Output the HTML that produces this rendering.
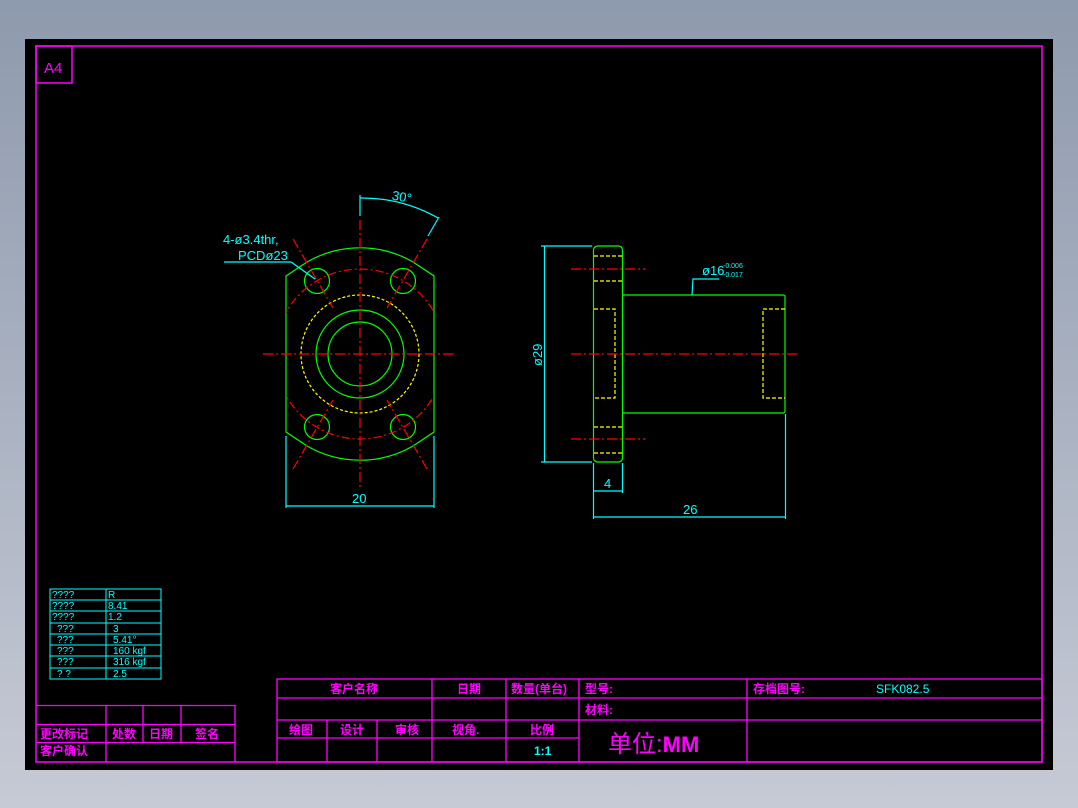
<!DOCTYPE html>
<html><head><meta charset="utf-8"><style>
html,body{margin:0;padding:0;width:1078px;height:808px;overflow:hidden;background:linear-gradient(#8e9aad,#c6cad5);}
svg{position:absolute;left:0;top:0}
.m{font-family:"Liberation Sans","Noto Sans CJK SC",sans-serif;font-weight:bold;fill:#ff00ff;font-size:12px}
</style></head><body>
<svg width="1078" height="808" viewBox="0 0 1078 808">
<rect x="25" y="39" width="1028" height="731" fill="#000"/>
<g fill="none" stroke="#ff00ff" stroke-width="1.5">
<rect x="36" y="46" width="1006" height="716"/>
<rect x="36" y="46" width="36" height="37"/>
</g>
<text x="44" y="73" fill="#ff00ff" font-family="Liberation Sans" font-size="15">A4</text>

<defs><clipPath id="fl"><path d="M286,276 L307,262 A106,106 0 0 1 413,262 L434,276 L434,432 L413,446 A106,106 0 0 1 307,446 L286,432 Z"/></clipPath></defs>
<g fill="none" stroke-width="1.2">
<path d="M286,276 L307,262 A106,106 0 0 1 413,262 L434,276 L434,432 L413,446 A106,106 0 0 1 307,446 L286,432 Z" stroke="#00ff00"/>
<circle cx="360" cy="354" r="44" stroke="#00ff00"/>
<circle cx="360" cy="354" r="32" stroke="#00ff00"/>
<circle cx="317" cy="281" r="12.5" stroke="#00ff00"/>
<circle cx="403" cy="281" r="12.5" stroke="#00ff00"/>
<circle cx="317" cy="427" r="12.5" stroke="#00ff00"/>
<circle cx="403" cy="427" r="12.5" stroke="#00ff00"/>
<circle cx="360" cy="354" r="59" stroke="#ffff00" stroke-dasharray="3,2"/>
<circle cx="360" cy="354" r="85" stroke="#ff0000" stroke-dasharray="8,3,2,3" clip-path="url(#fl)"/>
<g stroke="#ff0000" stroke-dasharray="10,3,2,3">
<line x1="263" y1="354" x2="456" y2="354"/>
<line x1="360" y1="220" x2="360" y2="487"/>
<line x1="293" y1="239" x2="333" y2="308"/>
<line x1="427" y1="239" x2="387" y2="308"/>
<line x1="293" y1="469" x2="333" y2="400"/>
<line x1="427" y1="469" x2="387" y2="400"/>
</g>
<g stroke="#00ffff">
<line x1="360" y1="195" x2="360" y2="216"/>
<path d="M360,198 A156,156 0 0 1 438,218"/>
<line x1="439" y1="217" x2="428" y2="236"/>
<line x1="224" y1="262" x2="291" y2="262"/>
<line x1="291" y1="262" x2="315" y2="279"/>
<line x1="286" y1="436" x2="286" y2="508"/>
<line x1="434" y1="436" x2="434" y2="508"/>
<line x1="286" y1="506" x2="434" y2="506"/>
</g>
</g>
<g fill="#00ffff" font-family="Liberation Sans" font-size="13">
<text x="392" y="201" transform="rotate(10 400 197)">30°</text>
<text x="223" y="244">4-ø3.4thr,</text>
<text x="238" y="260">PCDø23</text>
<text x="352" y="503">20</text>
</g>

<g fill="none" stroke-width="1.2">
<rect x="593.5" y="246" width="29" height="216" rx="4" stroke="#00ff00"/>
<path d="M622.5,295 H783 a2,2 0 0 1 2,2 V411 a2,2 0 0 1 -2,2 H622.5" stroke="#00ff00"/>
<g stroke="#ffff00" stroke-dasharray="4,2">
<line x1="594" y1="256" x2="622" y2="256"/>
<line x1="594" y1="281" x2="622" y2="281"/>
<line x1="594" y1="427" x2="622" y2="427"/>
<line x1="594" y1="453" x2="622" y2="453"/>
<path d="M594,309 H615 V398 H594"/>
<path d="M785,309 H763 V398 H785"/>
</g>
<g stroke="#ff0000" stroke-dasharray="10,3,2,3">
<line x1="571" y1="269" x2="645" y2="269"/>
<line x1="571" y1="439" x2="645" y2="439"/>
<line x1="571" y1="354" x2="800" y2="354"/>
</g>
<g stroke="#00ffff">
<line x1="541" y1="246" x2="592" y2="246"/>
<line x1="541" y1="462" x2="592" y2="462"/>
<line x1="544.5" y1="246" x2="544.5" y2="462"/>
<line x1="593.5" y1="463" x2="593.5" y2="519"/>
<line x1="622.5" y1="463" x2="622.5" y2="493"/>
<line x1="593.5" y1="491" x2="622.5" y2="491"/>
<line x1="785.5" y1="414" x2="785.5" y2="519"/>
<line x1="593.5" y1="517" x2="785.5" y2="517"/>
<polyline points="692,295 693,279 719,279"/>
</g>
</g>
<g fill="#00ffff" font-family="Liberation Sans" font-size="13">
<text x="0" y="0" transform="translate(542,366) rotate(-90)">ø29</text>
<text x="604" y="488">4</text>
<text x="683" y="514">26</text>
<text x="702" y="275">ø16</text>
<text x="723" y="268" font-size="7">-0.006</text>
<text x="723" y="277" font-size="7">-0.017</text>
</g>

<g stroke="#00ffff" fill="none" stroke-width="1">
<rect x="50" y="589" width="111" height="90"/>
<line x1="106" y1="589" x2="106" y2="679"/>
<line x1="50" y1="600" x2="161" y2="600"/><line x1="50" y1="611" x2="161" y2="611"/>
<line x1="50" y1="623" x2="161" y2="623"/><line x1="50" y1="634" x2="161" y2="634"/>
<line x1="50" y1="645" x2="161" y2="645"/><line x1="50" y1="656" x2="161" y2="656"/>
<line x1="50" y1="668" x2="161" y2="668"/>
</g>
<g fill="#00ffff" font-family="Liberation Sans" font-size="10">
<text x="52" y="598">????</text><text x="108" y="598">R</text>
<text x="52" y="609">????</text><text x="108" y="609">8.41</text>
<text x="52" y="620">????</text><text x="108" y="620">1.2</text>
<text x="57" y="632">???</text><text x="113" y="632">3</text>
<text x="57" y="643">???</text><text x="113" y="643">5.41°</text>
<text x="57" y="654">???</text><text x="113" y="654">160 kgf</text>
<text x="57" y="665">???</text><text x="113" y="665">316 kgf</text>
<text x="57" y="677">?   ?</text><text x="113" y="677">2.5</text>
</g>

<g stroke="#ff00ff" fill="none" stroke-width="1.3">
<path d="M36,705.5 H235 V762 M36,724.5 H235 M36,742.5 H235 M106,705.5 V762 M143,705.5 V742.5 M181,705.5 V742.5"/>
<rect x="277" y="679" width="765" height="83"/>
<path d="M277,698 H1042 M277,720 H1042 M277,738 H579"/>
<path d="M432,679 V762 M506,679 V762 M579,679 V762 M747,679 V762 M327,720 V762 M377,720 V762"/>
</g>
<g class="m">
<text x="40" y="738">更改标记</text>
<text x="112" y="738">处数</text>
<text x="149" y="738">日期</text>
<text x="195" y="738">签名</text>
<text x="40" y="755">客户确认</text>
<text x="330" y="693">客户名称</text>
<text x="457" y="693">日期</text>
<text x="511" y="693">数量(单台)</text>
<text x="585" y="693">型号:</text>
<text x="753" y="693">存档图号:</text>
<text x="585" y="714">材料:</text>
<text x="289" y="734">绘图</text>
<text x="340" y="734">设计</text>
<text x="395" y="734">审核</text>
<text x="452" y="734">视角.</text>
<text x="530" y="734">比例</text>
<text x="608" y="752" font-size="24" font-weight="normal">单位:<tspan font-weight="bold" font-size="22">MM</tspan></text>
</g>
<text x="876" y="693" fill="#00ffff" font-family="Liberation Sans" font-size="12">SFK082.5</text>
<text x="534" y="755" fill="#00ffff" font-family="Liberation Sans" font-size="12" font-weight="bold">1:1</text>
</svg>
</body></html>
